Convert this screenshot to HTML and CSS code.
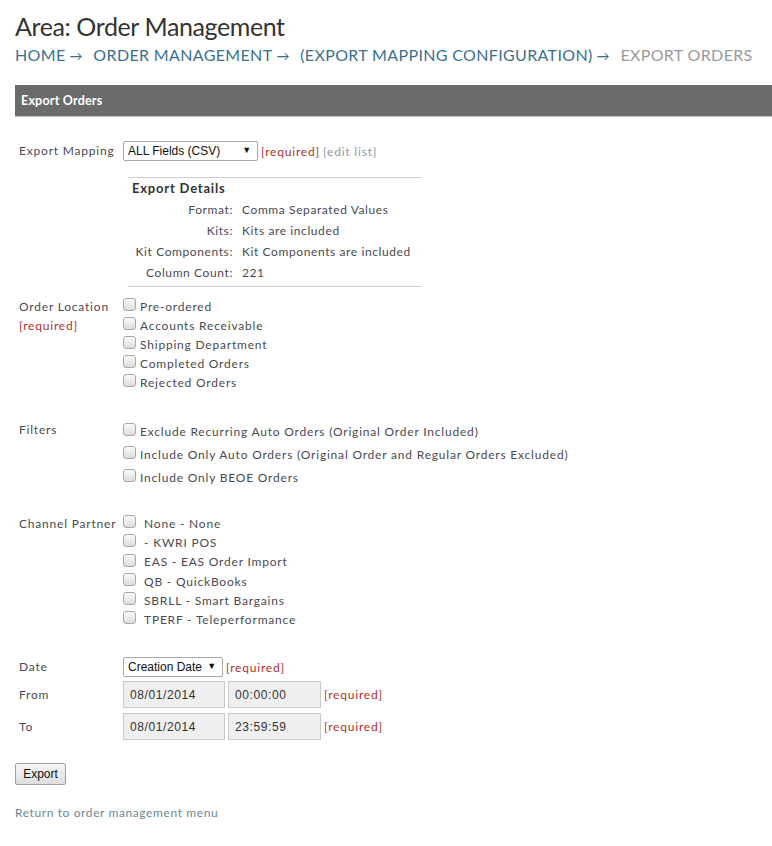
FILE: index.html
```html
<!DOCTYPE html>
<html lang="en">
<head>
    <meta charset="UTF-8">
    <title>Export Orders</title>
    <link rel="stylesheet" href="styles.css">
</head>
<body>
    <h1 class="area-title">Area: Order Management</h1>
    <div class="crumbs">
        <a href="#">Home</a><span class="arrow">&rarr;</span>
        <a href="#">Order Management</a><span class="arrow">&rarr;</span>
        <a href="#">(Export Mapping Configuration)</a><span class="arrow">&rarr;</span>
        <span class="current">Export Orders</span>
    </div>

    <div class="panel-head">Export Orders</div>

    <form class="export-form">
        <div class="row row-mapping">
            <div class="label">Export Mapping</div>
            <div class="field">
                <span class="sel-wrap">
                    <select class="sel sel-mapping">
                        <option>ALL Fields (CSV)</option>
                    </select>
                </span>
                <span class="req">[required]</span>
                <a href="#" class="edit">[edit list]</a>
            </div>
        </div>

        <div class="row">
            <div class="label"></div>
            <div class="details">
                <div class="details-title">Export Details</div>
                <div class="details-grid">
                    <span class="dk">Format:</span><span>Comma Separated Values</span>
                    <span class="dk">Kits:</span><span>Kits are included</span>
                    <span class="dk">Kit Components:</span><span>Kit Components are included</span>
                    <span class="dk">Column Count:</span><span>221</span>
                </div>
            </div>
        </div>

        <div class="row row-location">
            <div class="label">Order Location<br><span class="req">[required]</span></div>
            <div class="checks">
                <label><input type="checkbox"> Pre-ordered</label>
                <label><input type="checkbox"> Accounts Receivable</label>
                <label><input type="checkbox"> Shipping Department</label>
                <label><input type="checkbox"> Completed Orders</label>
                <label><input type="checkbox"> Rejected Orders</label>
            </div>
        </div>

        <div class="row row-filters">
            <div class="label">Filters</div>
            <div class="checks checks-wide">
                <label><input type="checkbox"> Exclude Recurring Auto Orders (Original Order Included)</label>
                <label><input type="checkbox"> Include Only Auto Orders (Original Order and Regular Orders Excluded)</label>
                <label><input type="checkbox"> Include Only BEOE Orders</label>
            </div>
        </div>

        <div class="row row-partner">
            <div class="label">Channel Partner</div>
            <div class="checks checks-partner">
                <label><input type="checkbox"> None - None</label>
                <label><input type="checkbox"> - KWRI POS</label>
                <label><input type="checkbox"> EAS - EAS Order Import</label>
                <label><input type="checkbox"> QB - QuickBooks</label>
                <label><input type="checkbox"> SBRLL - Smart Bargains</label>
                <label><input type="checkbox"> TPERF - Teleperformance</label>
            </div>
        </div>

        <div class="row row-date">
            <div class="label">Date</div>
            <div class="field">
                <span class="sel-wrap">
                    <select class="sel sel-date">
                        <option>Creation Date</option>
                    </select>
                </span>
                <span class="req">[required]</span>
            </div>
        </div>

        <div class="row row-range">
            <div class="label">From</div>
            <div class="field">
                <input class="txt txt-date" type="text" value="08/01/2014">
                <input class="txt txt-time" type="text" value="00:00:00">
                <span class="req">[required]</span>
            </div>
        </div>

        <div class="row row-range">
            <div class="label">To</div>
            <div class="field">
                <input class="txt txt-date" type="text" value="08/01/2014">
                <input class="txt txt-time" type="text" value="23:59:59">
                <span class="req">[required]</span>
            </div>
        </div>

        <button type="button" class="btn-export">Export</button>
    </form>

    <a href="#" class="back">Return to order management menu</a>
</body>
</html>
```

FILE: styles.css
```css
body {
    margin: 0;
    padding: 0 0 0 15px;
    font-family: Lato, "Open Sans", sans-serif;
    font-size: 12px;
    color: #4a4a52;
    background: #fff;
}

a {
    text-decoration: none;
}

.area-title {
    margin: 10px 0 0;
    font-size: 25px;
    font-weight: 400;
    letter-spacing: -0.4px;
    line-height: 32px;
    color: #333;
}

.crumbs {
    margin-top: 3px;
    font-size: 16px;
    line-height: 20px;
    text-transform: uppercase;
    letter-spacing: 0.35px;
    color: #3a7090;
}

.crumbs a {
    color: #3a7090;
}

.crumbs .arrow {
    margin: 0 6px 0 4px;
    font-size: 13px;
}

.crumbs .current {
    color: #9a9a9a;
}

.panel-head {
    margin-top: 19px;
    height: 31px;
    line-height: 31px;
    padding-left: 6px;
    background: #6b6b6b;
    border-bottom: 1px solid #c8c8c8;
    color: #fff;
    font-weight: 700;
    font-size: 12.5px;
    letter-spacing: 0.2px;
}

.export-form {
    padding: 24px 0 0 4px;
    letter-spacing: 0.8px;
}

.row {
    display: grid;
    grid-template-columns: 104px 1fr;
    align-items: start;
}

.label {
    line-height: 19px;
}

.field {
    display: flex;
    align-items: center;
    gap: 3px;
}

.req {
    color: #b0302c;
}

.edit {
    color: #8d9aa6;
}

.sel-wrap {
    position: relative;
    display: inline-block;
    height: 20px;
}

.sel-wrap::after {
    content: "\25BC";
    position: absolute;
    right: 6px;
    top: 3px;
    font-size: 9px;
    color: #111;
    pointer-events: none;
}

.sel {
    appearance: none;
    -webkit-appearance: none;
    box-sizing: border-box;
    font-family: "Liberation Sans", Arial, sans-serif;
    font-size: 12px;
    letter-spacing: 0;
    height: 20px;
    color: #111;
    background: #fff;
    border: 1px solid #a9a9a9;
    border-radius: 2px;
    padding: 0 4px;
    margin: 0;
}

.sel-mapping {
    width: 135px;
}

.sel-date {
    width: 100px;
}

.details {
    width: 290px;
    margin: 16px 0 0 5px;
    border-top: 1px solid #cfcfcf;
    border-bottom: 1px solid #cfcfcf;
    padding: 0 0 3px 4px;
}

.details-title {
    font-weight: 700;
    font-size: 13px;
    color: #333;
    line-height: 20px;
    margin-bottom: 1px;
}

.details-grid {
    display: grid;
    grid-template-columns: 101px 1fr;
    column-gap: 9px;
    line-height: 21px;
    letter-spacing: 0.6px;
}

.dk {
    text-align: right;
}

.row-location {
    margin-top: 10px;
}

.checks {
    display: flex;
    flex-direction: column;
}

.checks label {
    display: flex;
    align-items: center;
    line-height: 19px;
    gap: 4px;
}

.checks input {
    appearance: none;
    -webkit-appearance: none;
    box-sizing: border-box;
    margin: 0;
    width: 13px;
    height: 13px;
    border: 1px solid #a8a8a8;
    border-radius: 3px;
    background: linear-gradient(#fafafa, #dcdcdc);
    position: relative;
    top: -2px;
    flex: none;
}

.row-filters {
    margin-top: 28px;
}

.checks-wide label {
    line-height: 23px;
}

.row-partner {
    margin-top: 25px;
}

.checks-partner label {
    gap: 8px;
    line-height: 19.2px;
}

.row-date {
    margin-top: 28px;
}

.row-range {
    margin-top: 5px;
}

.row-date + .row-range {
    margin-top: 4px;
}

.row-range .label {
    line-height: 27px;
}

.txt {
    height: 27px;
    box-sizing: border-box;
    border: 1px solid #c9c9c9;
    background: #efefef;
    font-family: "Liberation Sans", Arial, sans-serif;
    font-size: 12px;
    letter-spacing: 0.6px;
    color: #333;
    padding: 0 6px;
    margin: 0;
}

.txt-date {
    width: 102px;
}

.txt-time {
    width: 93px;
}

.btn-export {
    margin: 23px 0 0 -4px;
    height: 22px;
    width: 51px;
    padding: 0;
    font-family: "Liberation Sans", Arial, sans-serif;
    font-size: 12px;
    color: #111;
    background: linear-gradient(#f6f6f6, #dedede);
    border: 1px solid #a0a0a0;
    border-radius: 2px;
}

.back {
    display: block;
    margin-top: 20px;
    color: #6c8796;
    letter-spacing: 0.6px;
}
```
